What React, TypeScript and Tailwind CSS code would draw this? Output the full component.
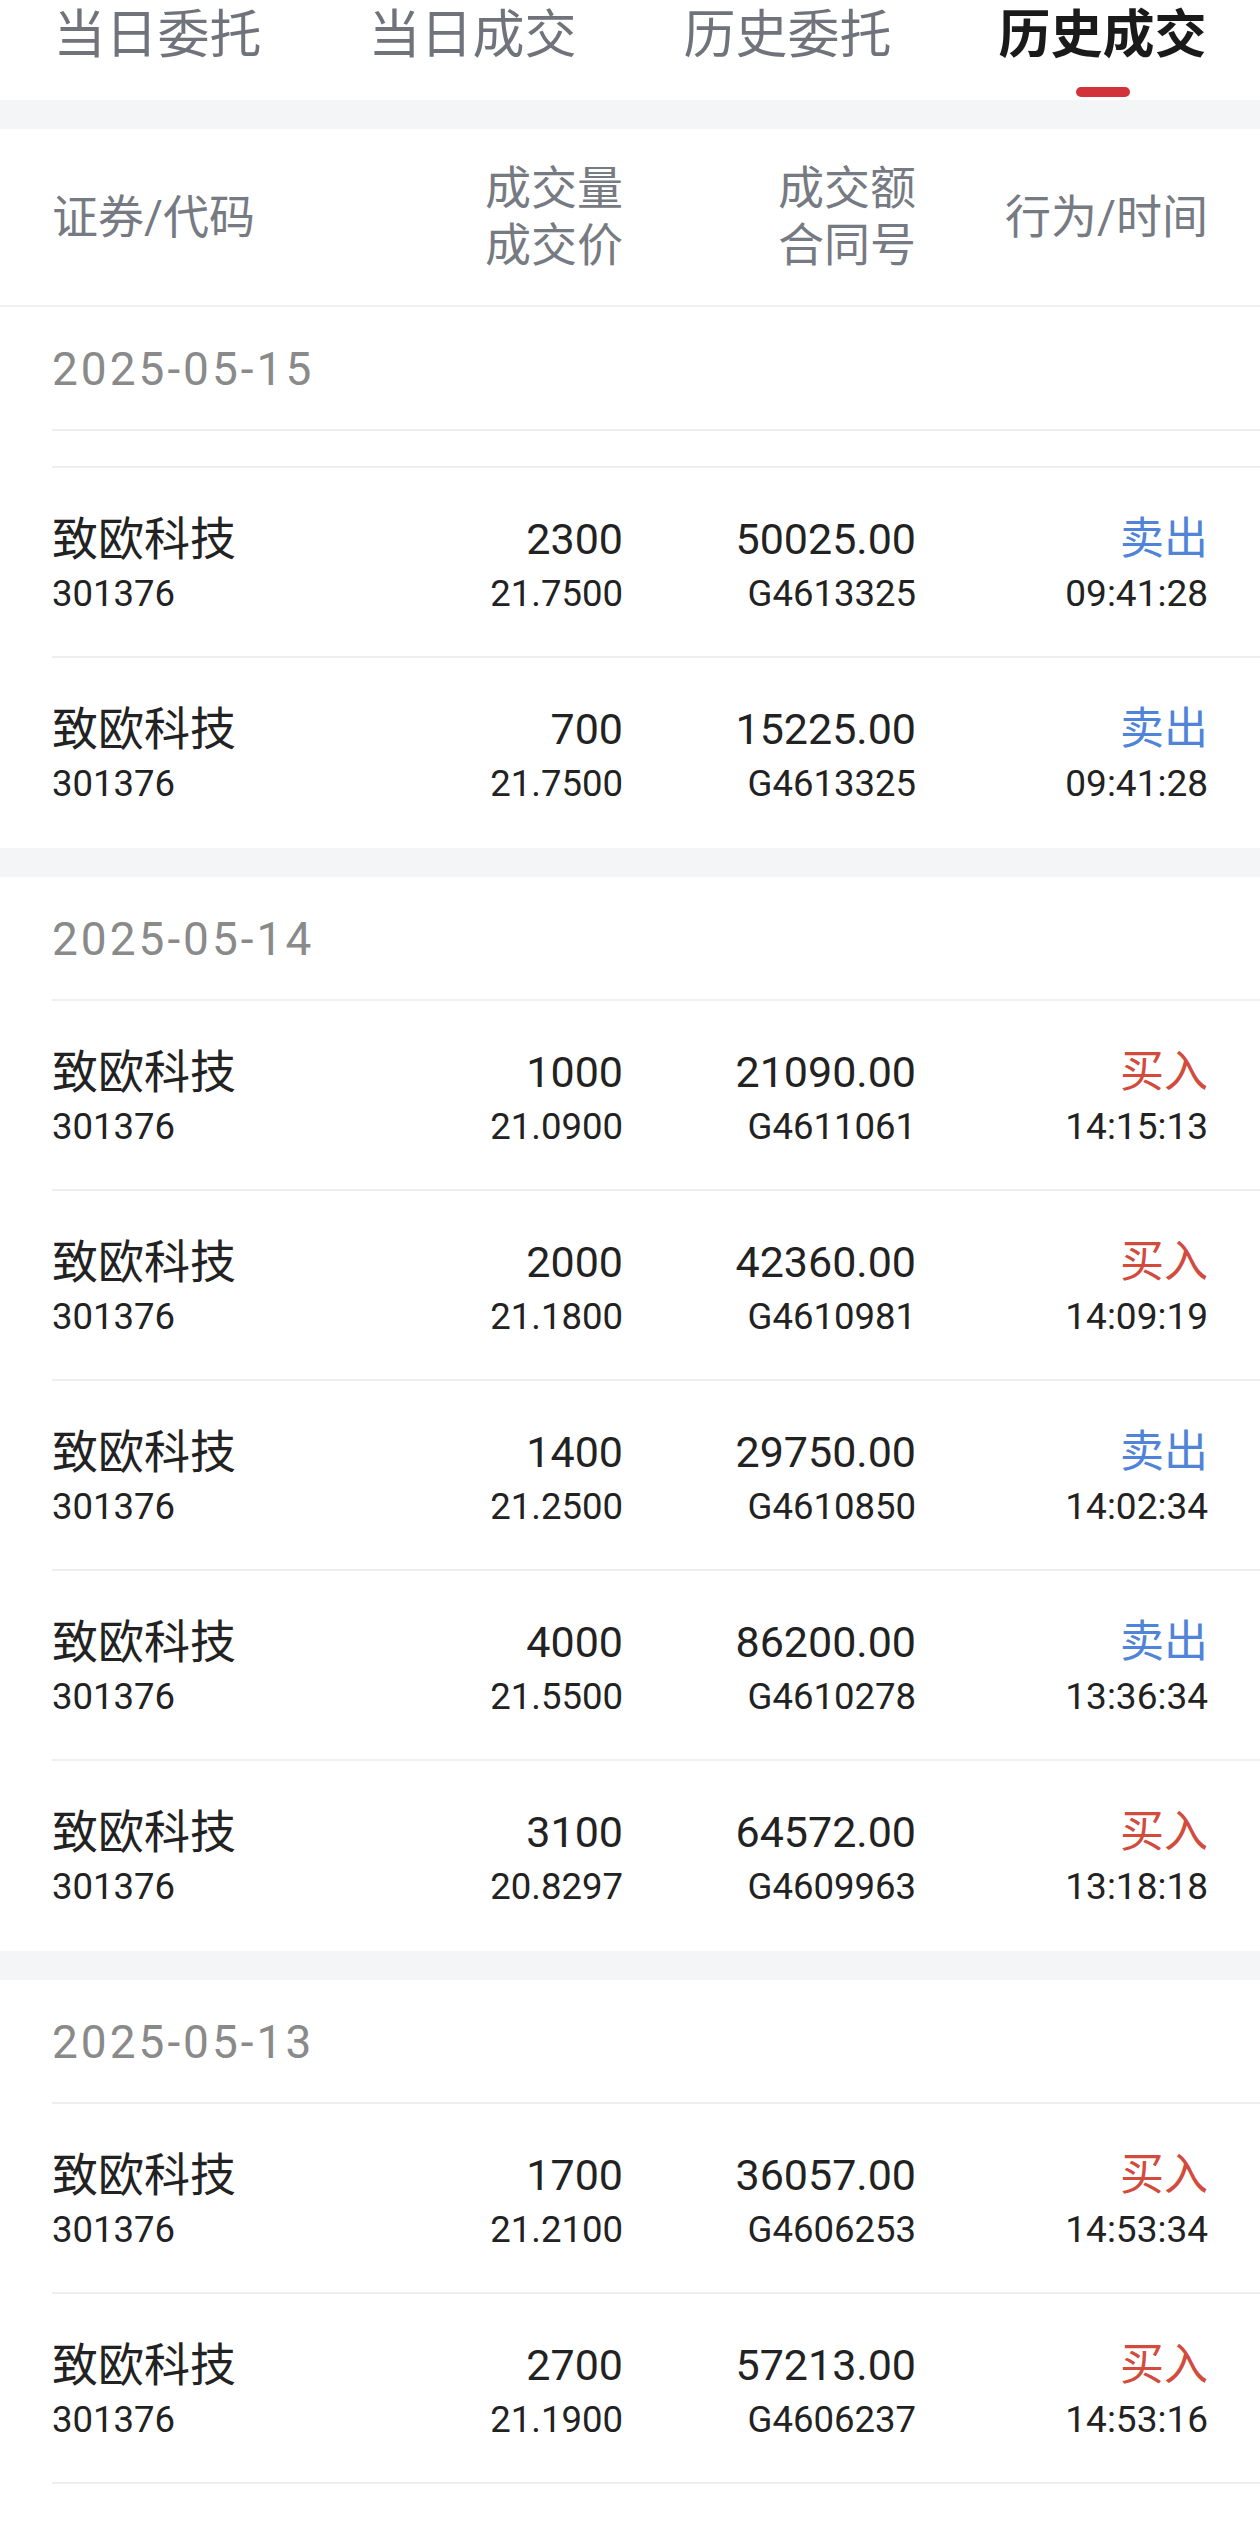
type Trade = {
  qty: string;
  price: string;
  amount: string;
  contract: string;
  side: "buy" | "sell";
  time: string;
};

type Day = {
  date: string;
  spacer?: boolean;
  trades: Trade[];
};

const tabs = ["当日委托", "当日成交", "历史委托", "历史成交"];

const days: Day[] = [
  {
    date: "2025-05-15",
    spacer: true,
    trades: [
      { qty: "2300", price: "21.7500", amount: "50025.00", contract: "G4613325", side: "sell", time: "09:41:28" },
      { qty: "700", price: "21.7500", amount: "15225.00", contract: "G4613325", side: "sell", time: "09:41:28" },
    ],
  },
  {
    date: "2025-05-14",
    trades: [
      { qty: "1000", price: "21.0900", amount: "21090.00", contract: "G4611061", side: "buy", time: "14:15:13" },
      { qty: "2000", price: "21.1800", amount: "42360.00", contract: "G4610981", side: "buy", time: "14:09:19" },
      { qty: "1400", price: "21.2500", amount: "29750.00", contract: "G4610850", side: "sell", time: "14:02:34" },
      { qty: "4000", price: "21.5500", amount: "86200.00", contract: "G4610278", side: "sell", time: "13:36:34" },
      { qty: "3100", price: "20.8297", amount: "64572.00", contract: "G4609963", side: "buy", time: "13:18:18" },
    ],
  },
  {
    date: "2025-05-13",
    trades: [
      { qty: "1700", price: "21.2100", amount: "36057.00", contract: "G4606253", side: "buy", time: "14:53:34" },
      { qty: "2700", price: "21.1900", amount: "57213.00", contract: "G4606237", side: "buy", time: "14:53:16" },
    ],
  },
];

function TradeRow({ trade, last }: { trade: Trade; last: boolean }) {
  return (
    <div
      className={`grid h-[190px] grid-cols-[278px_293px_293px_292px] pt-[43px] pr-[52px] ${
        last ? "" : "border-b-2 border-[#efefef]"
      }`}
    >
      <div className="flex flex-col">
        <span className="text-[46px] leading-[56px]">致欧科技</span>
        <span className="text-[36.5px] leading-[54px]">301376</span>
      </div>
      <div className="flex flex-col items-end">
        <span className="text-[43px] leading-[56px]">{trade.qty}</span>
        <span className="text-[36.5px] leading-[54px]">{trade.price}</span>
      </div>
      <div className="flex flex-col items-end">
        <span className="text-[43px] leading-[56px]">{trade.amount}</span>
        <span className="text-[36.5px] leading-[54px]">{trade.contract}</span>
      </div>
      <div className="flex flex-col items-end">
        <span
          className={`text-[44px] leading-[56px] ${
            trade.side === "buy" ? "text-[#d24b3c]" : "text-[#4f84d8]"
          }`}
        >
          {trade.side === "buy" ? "买入" : "卖出"}
        </span>
        <span className="text-[37px] leading-[54px]">{trade.time}</span>
      </div>
    </div>
  );
}

export default function App() {
  return (
    <div className="min-h-screen bg-white font-['Roboto','Noto_Sans_CJK_SC',sans-serif] text-[#222222]">
      {/* tabs */}
      <div className="grid h-[100px] grid-cols-4">
        {tabs.map((tab, i) => {
          const active = i === tabs.length - 1;
          return (
            <div key={tab} className="flex flex-col items-center">
              <span
                className={`text-[52px] leading-[72px] ${
                  active ? "font-bold text-[#1a1a1a]" : "text-[#70737b]"
                }`}
              >
                {tab}
              </span>
              {active && <span className="mt-[15px] h-[10px] w-[54px] rounded-full bg-[#d2333a]" />}
            </div>
          );
        })}
      </div>

      <div className="h-[29px] bg-[#f4f5f7]" />

      {/* column header */}
      <div className="grid h-[178px] grid-cols-[278px_293px_293px_292px] items-center border-b-2 border-[#f0f0f0] px-[52px] text-[46px] leading-[57px] text-[#767a82]">
        <span>证券/代码</span>
        <div className="flex flex-col items-end">
          <span>成交量</span>
          <span>成交价</span>
        </div>
        <div className="flex flex-col items-end">
          <span>成交额</span>
          <span>合同号</span>
        </div>
        <span className="text-right">行为/时间</span>
      </div>

      {days.map((day, di) => (
        <div key={day.date}>
          {di > 0 && <div className="h-[29px] bg-[#f4f5f7]" />}
          <div className="pl-[52px]">
            <div className="flex h-[124px] items-center border-b-2 border-[#efefef] pt-[3px] text-[46px] tracking-[3px] text-[#8a8a8a]">
              {day.date}
            </div>
            {day.spacer && <div className="h-[37px] border-b-2 border-[#efefef]" />}
            {day.trades.map((t, ti) => (
              <TradeRow
                key={t.contract + t.time + ti}
                trade={t}
                last={ti === day.trades.length - 1 && di < days.length - 1}
              />
            ))}
          </div>
        </div>
      ))}
    </div>
  );
}
